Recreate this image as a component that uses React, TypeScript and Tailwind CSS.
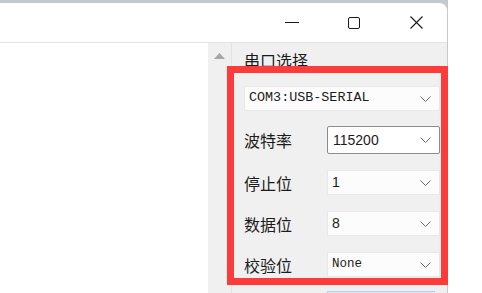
export default function App() {
  const rows = [
    { label: "停止位", value: "1", mono: false, mt: "mt-[16px]" },
    { label: "数据位", value: "8", mono: false, mt: "mt-[16px]" },
    { label: "校验位", value: "None", mono: true, mt: "mt-[16px]" },
  ];

  const Chevron = () => (
    <svg width="11" height="6" viewBox="0 0 11 6" className="shrink-0">
      <path d="M0.5 0.5 L5.5 5.5 L10.5 0.5" fill="none" stroke="#6b6b6b" strokeWidth="1" />
    </svg>
  );

  return (
    <div className="relative w-[482px] h-[293px] overflow-hidden bg-white flex font-['Noto_Sans_CJK_SC',sans-serif] text-[#1b1b1b]">
      <div className="w-[448px] h-full bg-[#c4c8cf] pt-[3px] flex flex-col">
        <div className="flex-1 min-h-0 bg-white rounded-tr-[8px] border-r border-[#c8c8c8] flex flex-col">
          {/* title bar */}
          <div className="h-[40px] shrink-0 flex justify-end border-b border-[#e3e3e3]">
            <div className="w-[62px] flex items-center justify-center">
              <div className="w-[14px] h-px bg-[#1a1a1a]" />
            </div>
            <div className="w-[62px] flex items-center justify-center">
              <div className="w-[12px] h-[12px] border border-[#1a1a1a] rounded-[2px]" />
            </div>
            <div className="w-[62px] flex items-center justify-center">
              <svg width="13" height="13" viewBox="0 0 13 13">
                <path d="M0.5 0.5 L12.5 12.5 M12.5 0.5 L0.5 12.5" stroke="#1a1a1a" strokeWidth="1.1" />
              </svg>
            </div>
          </div>

          {/* body */}
          <div className="flex-1 min-h-0 overflow-hidden flex">
            <div className="w-[208px] bg-white" />
            <div className="w-[24px] bg-[#f0f0f0] border-r border-[#e2e2e2] flex justify-center pt-[10px]">
              <svg width="11" height="6" viewBox="0 0 11 6">
                <path d="M5.5 0 L11 6 L0 6 Z" fill="#a6a6a6" />
              </svg>
            </div>
            <div className="flex-1 bg-[#f0f0f0] pl-[12px] pr-[4px]">
              <div className="mt-[7px] text-[16px] leading-[20px]">串口选择</div>

              <div className="mt-[16px] w-[196px] h-[25px] bg-[#fcfcfc] border border-[#e8e8e8] flex items-center justify-between pl-[4px] pr-[8px]">
                <span className="font-['Liberation_Mono',monospace] text-[13.4px] tracking-[0px]">COM3:USB-SERIAL</span>
                <Chevron />
              </div>

              <div className="mt-[15px] flex items-center">
                <div className="w-[83px] text-[16px] leading-[20px]">波特率</div>
                <div className="w-[113px] h-[28px] bg-white border border-[#8c8c8c] rounded-[2px] flex items-center justify-between pl-[5px] pr-[8px]">
                  <span className="font-['Liberation_Sans',sans-serif] text-[14px]">115200</span>
                  <Chevron />
                </div>
              </div>

              {rows.map((row, i) => (
                <div key={i} className={`${row.mt} flex items-center`}>
                  <div className="w-[83px] text-[16px] leading-[20px]">{row.label}</div>
                  <div className="w-[113px] h-[25px] bg-[#fcfcfc] border border-[#e8e8e8] flex items-center justify-between pl-[4px] pr-[8px]">
                    <span
                      className={
                        row.mono
                          ? "font-['Liberation_Mono',monospace] text-[12.5px]"
                          : "font-['Liberation_Sans',sans-serif] text-[14px]"
                      }
                    >
                      {row.value}
                    </span>
                    <Chevron />
                  </div>
                </div>
              ))}

              <div className="mt-[14px] ml-[83px] w-[108px] h-[10px] bg-[#dbe9f6] border border-[#b6d3ee]" />
            </div>
          </div>
        </div>
      </div>

      {/* red annotation box */}
      <div className="absolute left-[227px] top-[66px] w-[221px] h-[219px] border-[7px] border-[#fc3b3b]" />
    </div>
  );
}
